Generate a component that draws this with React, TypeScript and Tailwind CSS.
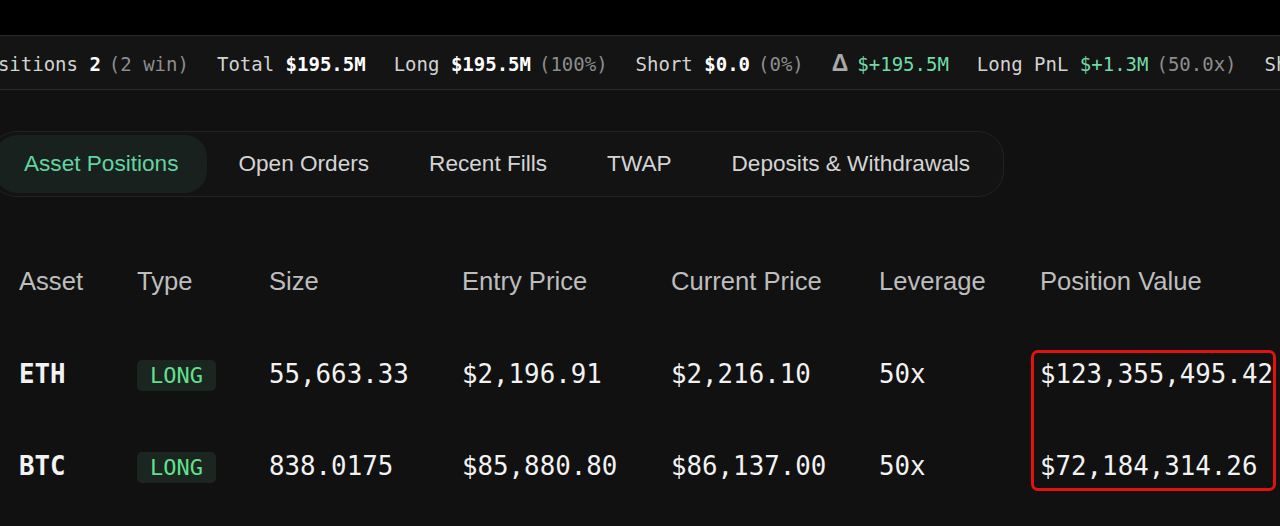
import React from 'react';

const mono = "font-['DejaVu_Sans_Mono','Liberation_Mono',monospace]";
const sans = "font-['Liberation_Sans',Arial,sans-serif]";

interface Stat {
  label: string;
  value: string;
  note?: string;
  green?: boolean;
  delta?: boolean;
}

const stats: Stat[] = [
  { label: 'Positions', value: '2', note: '(2 win)' },
  { label: 'Total', value: '$195.5M' },
  { label: 'Long', value: '$195.5M', note: '(100%)' },
  { label: 'Short', value: '$0.0', note: '(0%)' },
  { label: 'Δ', value: '$+195.5M', green: true, delta: true },
  { label: 'Long PnL', value: '$+1.3M', note: '(50.0x)', green: true },
  { label: 'Short PnL', value: '$0.0', note: '(0.0x)' },
];

const tabs = ['Asset Positions', 'Open Orders', 'Recent Fills', 'TWAP', 'Deposits & Withdrawals'];

const columns = ['Asset', 'Type', 'Size', 'Entry Price', 'Current Price', 'Leverage', 'Position Value'];

const rows = [
  { asset: 'ETH', type: 'LONG', size: '55,663.33', entry: '$2,196.91', current: '$2,216.10', leverage: '50x', value: '$123,355,495.42' },
  { asset: 'BTC', type: 'LONG', size: '838.0175', entry: '$85,880.80', current: '$86,137.00', leverage: '50x', value: '$72,184,314.26' },
];

const gridCols = 'grid grid-cols-[118px_132px_193px_209px_208px_161px_1fr] items-center pl-[19px]';

function StatItem({ stat }: { stat: Stat }) {
  return (
    <div className="flex shrink-0 items-baseline whitespace-nowrap">
      {stat.delta ? (
        <span className={`${sans} mr-[9px] text-[23px] font-bold leading-none text-[#a9a9a9]`}>{stat.label}</span>
      ) : (
        <span className="text-[#d2d2d2]">{stat.label}&nbsp;</span>
      )}
      <span className={stat.green ? 'text-[#6fdca8]' : 'font-bold text-white'}>{stat.value}</span>
      {stat.note && <span className="ml-[8px] text-[#8d8d8d]">{stat.note}</span>}
    </div>
  );
}

export default function App() {
  return (
    <div className="h-[526px] w-[1280px] overflow-hidden bg-[#111111]">
      <div className="h-[35px] bg-black" />

      <div className="h-[55px] overflow-hidden border-y border-[#2a2a2a] bg-[#141414]">
        <div className={`${mono} -ml-[25px] flex h-full items-center gap-[28px] pt-[3px] text-[19px]`}>
          {stats.map((s) => (
            <StatItem key={s.label} stat={s} />
          ))}
        </div>
      </div>

      <div className="mt-[41px] flex">
        <div className="-ml-[10px] flex h-[66px] items-center gap-[2px] rounded-[26px] border border-[#222222] bg-[#131313] px-[4px]">
          {tabs.map((tab, i) => (
            <div
              key={tab}
              className={`${sans} flex h-[58px] items-center rounded-[22px] px-[29px] text-[22.6px] ${
                i === 0 ? 'bg-[#18211d] text-[#63d3a1]' : 'text-[#d4d4d4]'
              }`}
            >
              {tab}
            </div>
          ))}
        </div>
      </div>

      <div className="relative mt-[37px]">
        <div className={`${gridCols} ${sans} h-[94px] text-[25.6px] text-[#bdbdbd]`}>
          {columns.map((c) => (
            <div key={c} className="whitespace-nowrap">{c}</div>
          ))}
        </div>
        {rows.map((r) => (
          <div key={r.asset} className={`${gridCols} ${mono} h-[92px] text-[25.8px] text-[#f2f2f2]`}>
            <div className="font-bold">{r.asset}</div>
            <div>
              <span className="inline-flex h-[31px] items-center rounded-[5px] bg-[#1b2620] px-[13px] text-[22px] text-[#62e08c]">
                {r.type}
              </span>
            </div>
            <div>{r.size}</div>
            <div>{r.entry}</div>
            <div>{r.current}</div>
            <div>{r.leverage}</div>
            <div className="whitespace-nowrap">{r.value}</div>
          </div>
        ))}
        <div className="pointer-events-none absolute left-[1031px] top-[116px] h-[141px] w-[245px] rounded-[7px] border-[3px] border-[#e3120f]" />
      </div>
    </div>
  );
}
